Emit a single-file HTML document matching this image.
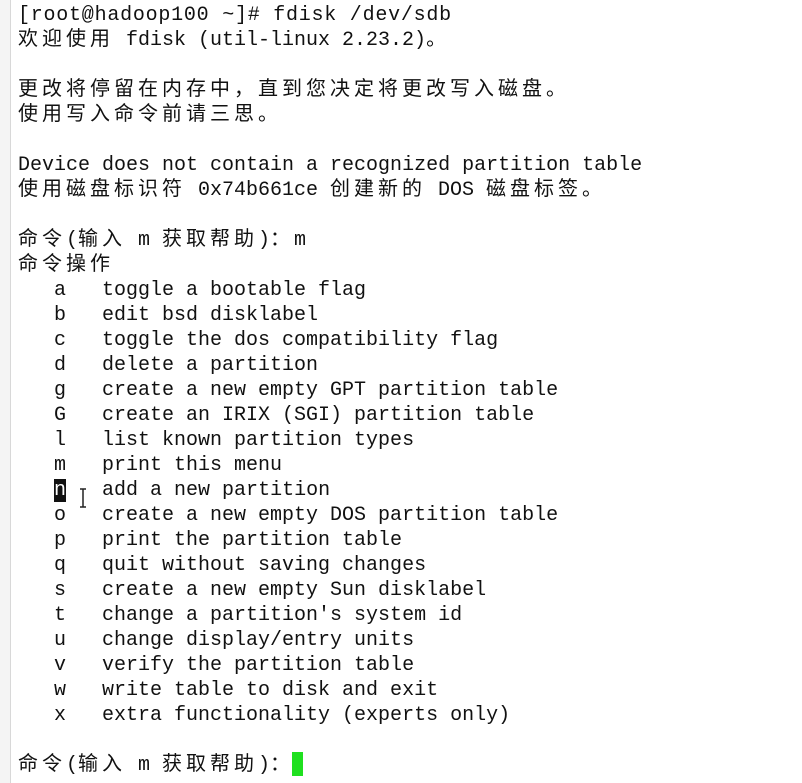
<!DOCTYPE html>
<html><head><meta charset="utf-8"><style>
html,body{margin:0;padding:0;background:#fff;width:802px;height:783px;overflow:hidden}
#left{position:absolute;left:0;top:0;width:10px;height:783px;background:#f4f4f4;border-right:1px solid #d8d8d8}
#t{position:absolute;left:18px;top:3px;font-family:"Liberation Mono","Noto Sans CJK SC",monospace;font-size:20px;line-height:25px;color:#111;white-space:pre}
.c{letter-spacing:4px}
.hl{background:#111;color:#fff}
#cur{position:absolute;left:292px;top:752px;width:11px;height:24px;background:#1fe01f}
#ib{position:absolute;left:80px;top:488px;width:6px;height:20px}
</style></head><body>
<div id="left"></div>
<div id="t"><span style="letter-spacing:0.76px">[root@hadoop100 ~]# fdisk /dev/sdb</span>
<span class="c">欢迎使用</span> fdisk (util-linux 2.23.2)<span class="c">。</span>

<span class="c">更改将停留在内存中，直到您决定将更改写入磁盘。</span>
<span class="c">使用写入命令前请三思。</span>

Device does not contain a recognized partition table
<span class="c">使用磁盘标识符</span> 0x74b661ce <span class="c">创建新的</span> DOS <span class="c">磁盘标签。</span>

<span class="c">命令</span>(<span class="c">输入</span> m <span class="c">获取帮助</span>)<span class="c">：</span>m
<span class="c">命令操作</span>
   a   toggle a bootable flag
   b   edit bsd disklabel
   c   toggle the dos compatibility flag
   d   delete a partition
   g   create a new empty GPT partition table
   G   create an IRIX (SGI) partition table
   l   list known partition types
   m   print this menu
   <span class="hl">n</span>   add a new partition
   o   create a new empty DOS partition table
   p   print the partition table
   q   quit without saving changes
   s   create a new empty Sun disklabel
   t   change a partition's system id
   u   change display/entry units
   v   verify the partition table
   w   write table to disk and exit
   x   extra functionality (experts only)

<span class="c">命令</span>(<span class="c">输入</span> m <span class="c">获取帮助</span>)<span class="c">：</span></div>
<svg id="ib" viewBox="0 0 6 20"><path d="M0 1h6M3 1v18M0 19h6" stroke="#222" stroke-width="1.5" fill="none"/></svg>
<div id="cur"></div>
</body></html>
